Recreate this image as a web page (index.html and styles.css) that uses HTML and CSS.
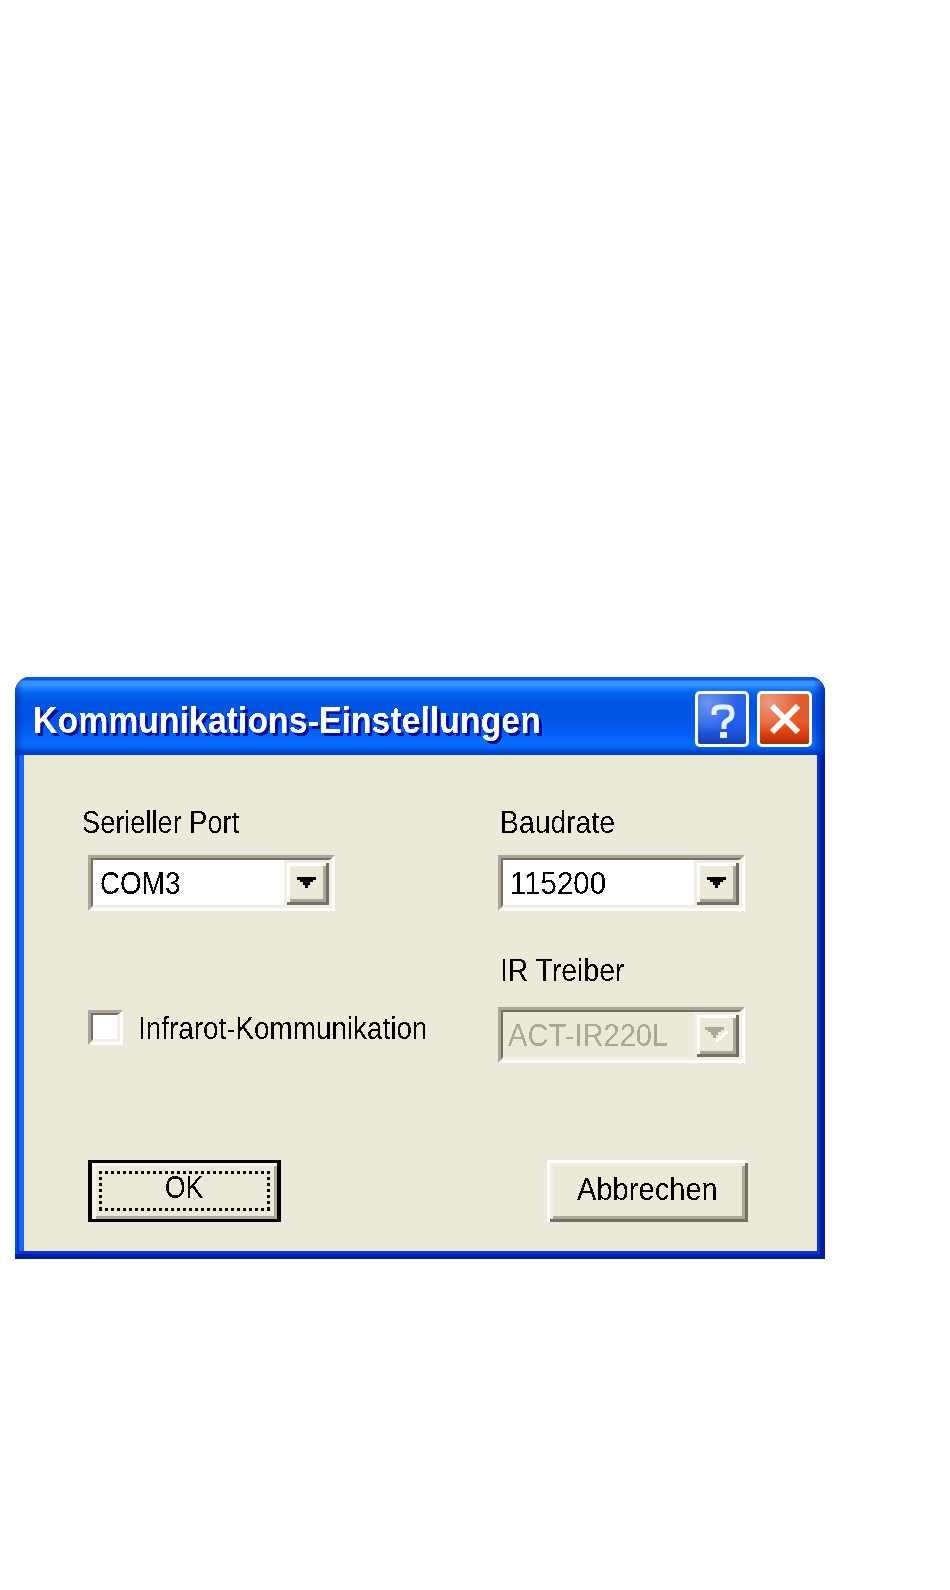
FILE: index.html
```html
<!DOCTYPE html>
<html lang="de">
<head>
<meta charset="utf-8">
<title>Kommunikations-Einstellungen</title>
<link rel="stylesheet" href="styles.css">
</head>
<body>
<svg class="defs" width="0" height="0" aria-hidden="true"><filter id="crisp" color-interpolation-filters="sRGB"><feComponentTransfer><feFuncA type="discrete" tableValues="0 0 1 1"/></feComponentTransfer></filter></svg>
<div class="window">
  <div class="titlebar">
    <div class="title-cell"><div class="title t">Kommunikations-Einstellungen</div></div>
    <div class="caption-btn help">
      <svg width="24" height="34" viewBox="0 0 24 34"><path class="help-glyph" d="M3 11 V8 Q3 3 9 3 H15 Q21 3 21 9 V10 Q21 14 17 16 Q13 18 13 21 V25"/><rect class="help-dot" x="9" y="28" width="7" height="6"/></svg>
    </div>
    <div class="caption-btn close">
      <svg width="34" height="34" viewBox="0 0 34 34"><path class="close-glyph" d="M4 4 L30 30 M30 4 L4 30"/></svg>
    </div>
  </div>
  <div class="content">
    <div class="row">
      <div class="field">
        <div class="label label-offset"><span class="t sx85">Serieller Port</span></div>
        <div class="combo">
          <div class="combo-in">
            <div class="combo-text"><span class="t sx87">COM3</span></div>
            <div class="combo-btn"><svg class="arrow" width="19" height="11" viewBox="0 0 19 11"><path d="M0 0 H19 V3 H16 V5 H13 V8 H11 V11 H8 V8 H6 V5 H3 V3 H0 Z"/></svg></div>
          </div>
        </div>
      </div>
      <div class="field">
        <div class="label label-offset-r"><span class="t sx88">Baudrate</span></div>
        <div class="combo">
          <div class="combo-in">
            <div class="combo-text"><span class="t sx92">115200</span></div>
            <div class="combo-btn"><svg class="arrow" width="19" height="11" viewBox="0 0 19 11"><path d="M0 0 H19 V3 H16 V5 H13 V8 H11 V11 H8 V8 H6 V5 H3 V3 H0 Z"/></svg></div>
          </div>
        </div>
      </div>
    </div>
    <div class="row row-two">
      <div class="check-line">
        <div class="combo checkbox"><div class="combo-in check-in"></div></div>
        <div class="label check-label"><span class="t sx87">Infrarot-Kommunikation</span></div>
      </div>
      <div class="field">
        <div class="label label-offset-r"><span class="t sx88">IR Treiber</span></div>
        <div class="combo combo-lower">
          <div class="combo-in disabled">
            <div class="combo-text disabled-text"><span class="t sx91">ACT-IR220L</span></div>
            <div class="combo-btn"><svg class="arrow" width="23" height="15" viewBox="0 0 23 15"><path class="arrow-light" d="M20 4 H23 V7 H20 V10 H17 V13 H14 V15 H11 V12 H14 V9 H17 V6 H20 Z"/><path class="arrow-off" d="M0 0 H19 V3 H16 V5 H13 V8 H11 V11 H8 V8 H6 V5 H3 V3 H0 Z"/></svg></div>
          </div>
        </div>
      </div>
    </div>
    <div class="actions">
      <div class="btn btn-default"><div class="focus"><span class="t sx84 mid">OK</span></div></div>
      <div class="btn btn-cancel"><span class="t sx91 mid">Abbrechen</span></div>
    </div>
  </div>
</div>
</body>
</html>
```
FILE: styles.css
```css
* { box-sizing: border-box; }
html, body { margin: 0; background: #fff; }
body {
  padding: 677px 0 0 15px;
  min-height: 1590px;
  font-family: "Liberation Sans", Arial, sans-serif;
  color: #000;
}
.defs { display: block; height: 0; }
.t {
  display: inline-block;
  transform-origin: left center;
  filter: url(#crisp);
}
.mid { transform-origin: center center; }
.sx84 { transform: scaleX(.84); }
.sx85 { transform: scaleX(.85); }
.sx87 { transform: scaleX(.87); }
.sx88 { transform: scaleX(.885); }
.sx91 { transform: scaleX(.91); }
.sx92 { transform: scaleX(.92); }
.window {
  width: 810px;
  height: 582px;
  display: flex;
  flex-direction: column;
  border-radius: 15px 15px 0 0;
  overflow: hidden;
  background: #0831d9;
  box-shadow: inset 0 -5px 0 #001ea0, inset -5px 0 0 #001ea0, inset 2px 0 0 #0855dd;
}
.titlebar {
  height: 78px;
  flex: none;
  display: flex;
  align-items: center;
  padding: 6px 13px 0 18px;
  background:
    linear-gradient(90deg, rgba(0, 30, 160, .45) 0, rgba(0, 30, 160, 0) 9px),
    linear-gradient(270deg, rgba(0, 30, 160, .75) 0, rgba(0, 30, 160, 0) 12px),
    linear-gradient(180deg, #0058ee 0, #0058ee 3px, #3a93ff 4px, #3a93ff 8px, #1478fb 12px, #0262ee 17px, #0054e3 26px, #0055e6 44px, #005bf5 52px, #0a6cfb 66px, #0062ef 71px, #0046d8 74px, #0040d0 78px);
}
.title-cell {
  flex: 1;
  min-width: 0;
  padding-top: 4px;
}
.title {
  transform: scaleX(.915);
  font-weight: 700;
  font-size: 37px;
  line-height: 40px;
  color: #fff;
  text-shadow: 3px 3px 0 #00109a;
  white-space: nowrap;
}
.caption-btn {
  flex: none;
  width: 54px;
  height: 56px;
  border: 3px solid #fff;
  border-radius: 5px;
  display: flex;
  align-items: center;
  justify-content: center;
}
.help {
  padding: 3px 0 0 2px;
  background:
    radial-gradient(circle at 20% 18%, #6f93f0 0, rgba(111, 147, 240, 0) 55%),
    linear-gradient(180deg, #2a62e4 0, #1f5fee 60%, #1a4ecc 85%, #143ea8 100%);
}
.close {
  width: 55px;
  margin-left: 8px;
  background:
    radial-gradient(circle at 18% 15%, #ed9a80 0, rgba(237, 154, 128, 0) 55%),
    linear-gradient(180deg, #df5a30 0, #e65a26 55%, #db3c06 82%, #a82c0a 100%);
}
.help-glyph { fill: none; stroke: #fff; stroke-width: 5; opacity: .9; }
.help-dot { fill: #fff; opacity: .9; }
.close-glyph { fill: none; stroke: #fff; stroke-width: 6; }
.content {
  flex: 1;
  margin: 0 8px 8px 9px;
  padding: 49px 0 0 64px;
  background: #ece9d8;
  box-shadow: -5px 0 0 #1568ee, 3px 0 0 #0831d9, 0 3px 0 #0831d9;
}
.row {
  display: grid;
  grid-template-columns: 410px 247px;
}
.row-two { margin-top: 41px; }
.field { display: flex; flex-direction: column; }
.label {
  font-size: 32px;
  line-height: 36px;
  height: 36px;
  white-space: nowrap;
}
.label-offset { margin-left: -6px; }
.label-offset-r { margin-left: 2px; }
.check-label { margin-top: 1px; }
.combo {
  margin-top: 15px;
  width: 247px;
  height: 56px;
  border-style: solid;
  border-width: 3px;
  border-color: #aca899 #fff #fff #aca899;
}
.combo-lower { margin-top: 19px; }
.combo-in {
  height: 100%;
  display: flex;
  background: #fff;
  border-style: solid;
  border-width: 2px 3px 3px 2px;
  border-color: #716f64 #f1efe2 #f1efe2 #716f64;
}
.combo-text {
  flex: 1;
  min-width: 0;
  padding-left: 7px;
  font-size: 32px;
  line-height: 46px;
  white-space: nowrap;
}
.combo-btn {
  width: 45px;
  height: 45px;
  flex: none;
  display: flex;
  align-items: center;
  justify-content: center;
  background: #ece9d8;
  box-shadow: inset 3px 3px 0 #f1efe2, inset -3px -3px 0 #716f64, inset 6px 6px 0 #fff, inset -6px -6px 0 #aca899;
}
.arrow { display: block; }
.arrow path { fill: #000; }
.arrow .arrow-off { fill: #aca899; }
.arrow .arrow-light { fill: #fff; }
.disabled { background: #ece9d8; }
.disabled-text { color: #aca899; padding-left: 5px; }
.check-line {
  align-self: end;
  margin-bottom: 17px;
  display: flex;
  align-items: center;
  gap: 15px;
}
.checkbox {
  margin-top: 0;
  width: 35px;
  height: 35px;
  flex: none;
}
.actions {
  margin-top: 97px;
  width: 660px;
  display: flex;
  justify-content: space-between;
}
.btn {
  height: 62px;
  background: #ece9d8;
  font-size: 32px;
  text-align: center;
}
.btn-default {
  width: 193px;
  border-style: solid;
  border-color: #000;
  border-width: 3px 4px;
  padding: 8px 7px;
  box-shadow: inset 4px 3px 0 #f7f5ec, inset -3px -3px 0 #aca899;
}
.focus {
  height: 100%;
  line-height: 33px;
  background:
    repeating-linear-gradient(90deg, #000 0 3px, transparent 3px 6px) top left / 100% 3px no-repeat,
    repeating-linear-gradient(90deg, #000 0 3px, transparent 3px 6px) bottom left / 100% 3px no-repeat,
    repeating-linear-gradient(180deg, #000 0 3px, transparent 3px 6px) top left / 3px 100% no-repeat,
    repeating-linear-gradient(180deg, #000 0 3px, transparent 3px 6px) top right / 3px 100% no-repeat;
}
.btn-cancel {
  width: 201px;
  line-height: 58px;
  box-shadow: inset 3px 3px 0 #fff, inset -3px -3px 0 #716f64, inset 6px 6px 0 #f1efe2, inset -6px -6px 0 #aca899;
}
```
